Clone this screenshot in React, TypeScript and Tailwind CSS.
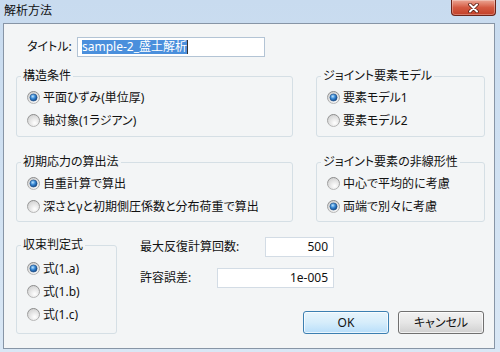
import React from 'react';

function Radio({ checked = false }: { checked?: boolean }) {
  return (
    <svg width="13" height="13" viewBox="0 0 13 13" className="shrink-0">
      <defs>
        <linearGradient id="rRing" x1="0" y1="0" x2="0" y2="1">
          <stop offset="0" stopColor="#8a8a8a" />
          <stop offset="1" stopColor="#b8b8b8" />
        </linearGradient>
        <radialGradient id="rFill" cx="0.6" cy="0.7" r="0.75">
          <stop offset="0" stopColor="#ffffff" />
          <stop offset="1" stopColor="#cfcfcf" />
        </radialGradient>
        <radialGradient id="rDot" cx="0.4" cy="0.35" r="0.7">
          <stop offset="0" stopColor="#bfe6ff" />
          <stop offset="0.45" stopColor="#3a8ad6" />
          <stop offset="1" stopColor="#0b3f80" />
        </radialGradient>
      </defs>
      <circle cx="6.5" cy="6.5" r="6" fill="url(#rFill)" stroke="url(#rRing)" strokeWidth="1" />
      {checked && <circle cx="6.5" cy="6.5" r="3.6" fill="url(#rDot)" stroke="#1d4c82" strokeWidth="0.6" />}
    </svg>
  );
}

function Option({ label, checked }: { label: string; checked?: boolean }) {
  return (
    <div className="flex items-center h-[23px] pl-[10px] gap-[3px] whitespace-nowrap">
      <Radio checked={checked} />
      <span>{label}</span>
    </div>
  );
}

function Group({ title, className = '', children }: { title: string; className?: string; children: React.ReactNode }) {
  return (
    <fieldset className={`border border-[#d5dfe5] rounded-[3px] min-w-0 ${className}`}>
      <legend className="ml-[4px] px-[2px] leading-[16px]">{title}</legend>
      {children}
    </fieldset>
  );
}

export default function App() {
  return (
    <div className="w-[500px] h-[352px] overflow-hidden bg-linear-to-b from-[#c8dbef] to-[#d9e7f5] text-[12px] leading-[16px] text-[#111] font-['Noto_Sans','Noto_Sans_CJK_JP',sans-serif] [font-feature-settings:'palt']">
      {/* title bar */}
      <div className="h-[23px] flex items-start justify-between">
        <span className="pl-[4px] pt-[3px]">解析方法</span>
        <div className="mr-[4px] w-[45px] h-[16px] rounded-b-[4px] border border-t-0 border-[#6b2419] bg-linear-to-b from-[#eba594] via-[#d45a42] to-[#c23f28] flex items-center justify-center shadow-[inset_0_0_0_1px_rgba(255,255,255,0.3)]">
          <svg width="13" height="10" viewBox="0 0 13 10">
            <path d="M3 1.5 L10 8.5 M10 1.5 L3 8.5" stroke="#5a1c12" strokeWidth="3.6" strokeLinecap="round" />
            <path d="M3 1.5 L10 8.5 M10 1.5 L3 8.5" stroke="#ffffff" strokeWidth="2" strokeLinecap="round" />
          </svg>
        </div>
      </div>

      {/* client area */}
      <div className="ml-[3px] w-[492px] h-[326px] border border-[#8795a6] bg-[#f3f5f6]">
        <div className="mt-[13px] h-[20px] pl-[23px] flex items-center">
          <span className="w-[50px] shrink-0 whitespace-nowrap">タイトル:</span>
          <div className="w-[188px] h-[20px] border border-[#b3c4d5] bg-white flex items-center pl-[4px]">
            <span className="bg-[#4a8fdc] text-white leading-[14px] whitespace-nowrap">sample-2_盛土解析</span>
            <span className="w-px h-[14px] bg-[#333]" />
          </div>
        </div>

        <div className="mt-[11px] pl-[12px] flex gap-[23px]">
          <Group title="構造条件" className="w-[277px]">
            <div className="pt-[2px] pb-[4px]">
              <Option label="平面ひずみ(単位厚)" checked />
              <Option label="軸対象(1ラジアン)" />
            </div>
          </Group>
          <Group title="ジョイント要素モデル" className="w-[169px]">
            <div className="pt-[2px] pb-[4px]">
              <Option label="要素モデル1" checked />
              <Option label="要素モデル2" />
            </div>
          </Group>
        </div>

        <div className="mt-[17px] pl-[12px] flex gap-[23px]">
          <Group title="初期応力の算出法" className="w-[277px]">
            <div className="pt-[2px] pb-[3px]">
              <Option label="自重計算で算出" checked />
              <Option label="深さとγと初期側圧係数と分布荷重で算出" />
            </div>
          </Group>
          <Group title="ジョイント要素の非線形性" className="w-[169px]">
            <div className="pt-[2px] pb-[3px]">
              <Option label="中心で平均的に考慮" />
              <Option label="両端で別々に考慮" checked />
            </div>
          </Group>
        </div>

        <div className="mt-[15px] pl-[12px] flex">
          <Group title="収束判定式" className="w-[101px]">
            <div className="pt-[4px] pb-[5px]">
              <Option label="式(1.a)" checked />
              <Option label="式(1.b)" />
              <Option label="式(1.c)" />
            </div>
          </Group>
          <div className="ml-[23px] w-[344px] flex flex-col">
            <div className="w-[194px] h-[20px] flex items-center justify-between">
              <span className="whitespace-nowrap">最大反復計算回数:</span>
              <div className="w-[69px] h-[20px] border border-[#d3dce5] bg-white flex items-center justify-end pr-[5px]">500</div>
            </div>
            <div className="mt-[11px] w-[194px] h-[20px] flex items-center justify-between">
              <span className="whitespace-nowrap">許容誤差:</span>
              <div className="w-[117px] h-[20px] border border-[#d3dce5] bg-white flex items-center justify-end pr-[5px]">1e-005</div>
            </div>
            <div className="mt-[23px] flex justify-end gap-[9px]">
              <button className="w-[86px] h-[23px] rounded-[3px] border border-[#3c7fb1] bg-linear-to-b from-[#e8f5fc] via-[#d6edfb] to-[#b8defa] shadow-[inset_0_0_0_1px_rgba(255,255,255,0.7)]">OK</button>
              <button className="w-[86px] h-[23px] rounded-[3px] border border-[#707070] bg-linear-to-b from-[#f2f2f2] via-[#e6e6e6] to-[#d0d0d0] shadow-[inset_0_0_0_1px_rgba(255,255,255,0.7)]">キャンセル</button>
            </div>
          </div>
        </div>
      </div>
    </div>
  );
}
